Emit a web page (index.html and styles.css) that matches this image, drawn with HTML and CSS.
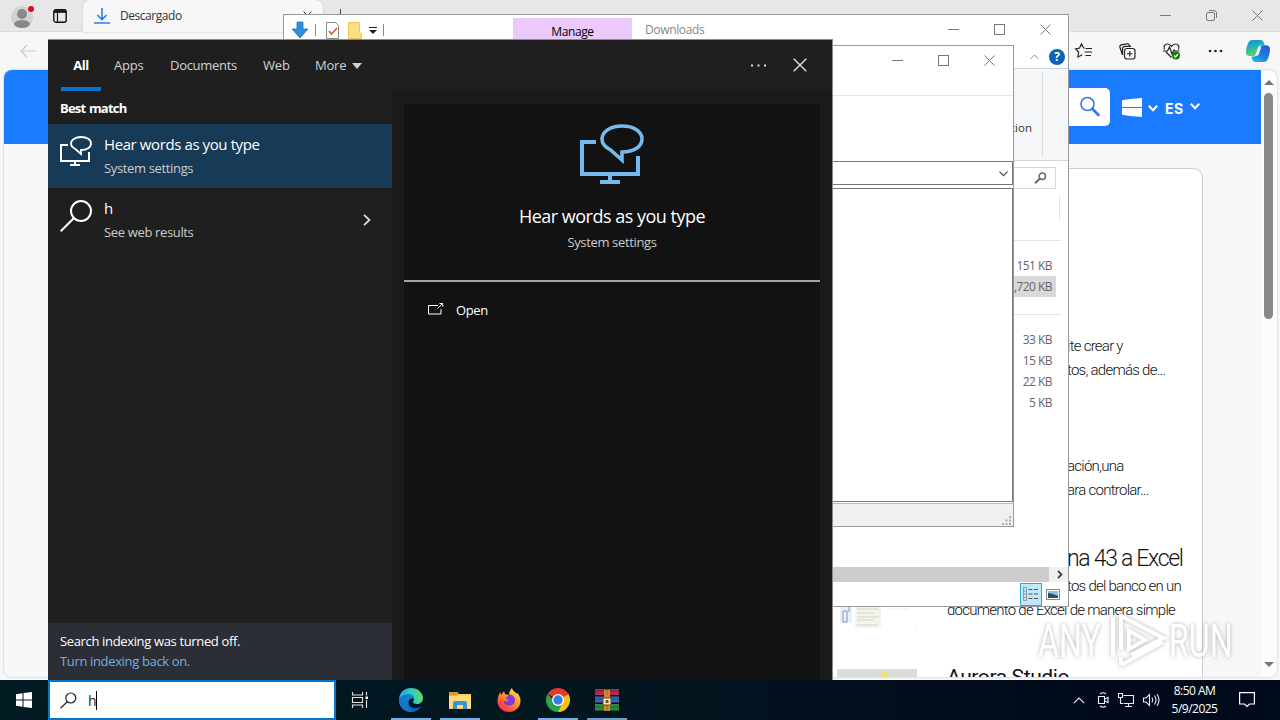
FILE: index.html
```html
<!DOCTYPE html>
<html lang="en">
<head>
    <meta charset="utf-8">
    <title>Desktop</title>
    <link rel="stylesheet" href="styles.css">
</head>
<body>
<div class="desktop">

    <!-- browser -->
    <div class="browser">
        <div class="tab-strip">
            <div class="profile">
                <svg width="24" height="24" viewBox="0 0 24 24"><circle cx="11" cy="13" r="11" fill="#d5d3d1"/><circle cx="11" cy="10" r="5" fill="#8a8886"/><ellipse cx="11" cy="20" rx="8" ry="4" fill="#8a8886"/><circle cx="20" cy="5" r="3" fill="#d40f1b"/></svg>
            </div>
            <svg class="workspaces" width="14" height="14" viewBox="0 0 14 14"><rect x=".8" y=".8" width="12.4" height="12.4" rx="2" fill="none" stroke="#111" stroke-width="1.4"/><path d="M1 2.500h12" stroke="#111" stroke-width="2.600"/><path d="M4.500 3v10" stroke="#111" stroke-width="1.200"/></svg>
            <div class="tab">
                <svg width="16" height="16" viewBox="0 0 16 16" fill="none" stroke="#2b7cf0" stroke-width="1.6"><path d="M8 0v11M3.5 7L8 11.5 12.5 7M0 15h16"/></svg>
                <span>Descargado</span>
                <svg class="tab-close" width="9" height="9" viewBox="0 0 9 9" stroke="#333"><path d="M.5.5l8 8M8.500.5l-8 8"/></svg>
            </div>
            <svg class="new-tab" width="13" height="13" viewBox="0 0 13 13" stroke="#444"><path d="M6.500 0v13M0 6.500h13"/></svg>
            <div class="win-controls">
                <svg width="11" height="11" viewBox="0 0 11 11"><path d="M0 5.500h11"/></svg>
                <svg width="11" height="11" viewBox="0 0 11 11"><rect x=".5" y="2.500" width="8" height="8" rx="1.500"/><path d="M3 .5h5q2.500 0 2.500 2.500v5"/></svg>
                <svg width="11" height="11" viewBox="0 0 11 11"><path d="M.5.5l10 10M10.500.5l-10 10"/></svg>
            </div>
        </div>
        <div class="toolbar">
            <svg class="back" width="16" height="14" viewBox="0 0 16 14" fill="none" stroke="#c9c9c9" stroke-width="1.200"><path d="M16 7H1M7 1L1 7l6 6"/></svg>
            <div class="toolbar-icons">
                <svg width="17" height="16" viewBox="0 0 17 16"><path d="M9.500 5.200L8.700 5 6.500.8 4.600 5 .6 5.800l3 3.200-.7 5 4.300-2.200M10.500 5.500H17M9.500 9H17M10.500 12.500H16"/></svg>
                <svg width="17" height="17" viewBox="0 0 17 17"><rect x="5.500" y="5.500" width="10.500" height="10.500" rx="2.500"/><path d="M10.750 8v5.500M8 10.750h5.500M3.500 12L1 4.500Q.3 2.500 2.200 1.900L7.500.8q2-.5 2.700 1.200l.4 1M3.500 12V6q0-2.500 2.500-2.700h6"/></svg>
                <svg width="18" height="17" viewBox="0 0 18 17"><path d="M8.500 14.500L3 9M1.500 6.500C0 3.500 2 1 4.500 1 6.500 1 7.500 2 8.500 3.300 9.500 2 10.500 1 12.500 1 15 1 17 3.500 15.500 6.500M0 8h4.500l2-4 2.500 7 2-4 1 1h4.500"/><circle cx="13" cy="12.500" r="4" fill="#107c10" stroke="none"/><path d="M11 12.500l1.500 1.500 2.500-3" stroke="#fff"/></svg>
                <svg width="15" height="4" viewBox="0 0 15 4"><g fill="#222" stroke="none"><circle cx="2" cy="2" r="1.300"/><circle cx="7.500" cy="2" r="1.300"/><circle cx="13" cy="2" r="1.300"/></g></svg>
                <svg class="copilot" width="24" height="22" viewBox="0 0 24 22">
                    <defs>
                        <linearGradient id="cpA" x1="0" y1="0" x2=".3" y2="1"><stop offset="0" stop-color="#1588d8"/><stop offset=".5" stop-color="#22b5b0"/><stop offset="1" stop-color="#62d35c"/></linearGradient>
                        <linearGradient id="cpB" x1="0" y1="1" x2=".6" y2="0"><stop offset="0" stop-color="#23c1f2"/><stop offset=".5" stop-color="#1a83e0"/><stop offset="1" stop-color="#2360d8"/></linearGradient>
                    </defs>
                    <path d="M6 0h9q2 0 3 3l.6 2H15q-2 0-2.800 3l-1.500 5q-.8 3-3.200 3H3.500Q0 16-.1 12 0 8 2 3.500 3.500 0 6 0z" fill="url(#cpA)" stroke="none"/>
                    <path d="M18 22H9q-2 0-3-3l-.5-2.500h2.800q2.400 0 3.200-3L13 8q.8-2.800 3-2.800h4.500q3.500.3 3.500 4.300 0 4-2 9-1.500 3.500-4 3.500z" fill="url(#cpB)" stroke="none"/>
                    <path d="M12.500 6.500h3l-3.300 9h-3z" fill="#f7f7f7" stroke="none"/>
                </svg>
            </div>
        </div>
        <div class="page">
            <div class="page-content">
                <div class="site-header">
                    <div class="site-search">
                        <svg width="22" height="22" viewBox="0 0 22 22" fill="none" stroke="#2f79e8"><circle cx="8.500" cy="8" r="6.500" stroke-width="1.600"/><path d="M13.500 13l6 6" stroke-width="2.600" stroke-linecap="round"/></svg>
                    </div>
                    <svg class="site-win" width="20" height="19" viewBox="0 0 20 19" fill="#fff"><path d="M0 2.200L8 1v8H0zM8 1L20 0v9H8zM0 10h8v8l-8-1.200zM8 10H20v9l-12-1z"/></svg>
                    <svg class="chev-a" width="10" height="7" viewBox="0 0 10 7" fill="none" stroke="#fff" stroke-width="2"><path d="M.8.8L5 5.200 9.200.8"/></svg>
                    <span class="lang">ES</span>
                    <svg class="chev-b" width="10" height="7" viewBox="0 0 10 7" fill="none" stroke="#fff" stroke-width="2"><path d="M.8.8L5 5.200 9.200.8"/></svg>
                </div>
                <div class="results">
                    <div class="result">
                        <div class="thumb"></div>
                        <div class="result-text"><h3></h3><p class="cut">ite crear y</p><p class="cut">tos, además de...</p></div>
                    </div>
                    <div class="result">
                        <div class="thumb"></div>
                        <div class="result-text"><h3></h3><p class="cut">ación,una</p><p class="cut">ara controlar...</p></div>
                    </div>
                    <div class="result">
                        <div class="thumb">
                            <svg width="80" height="80" viewBox="0 0 80 80"><rect x="3" y="57" width="12" height="17" fill="#e9eff6"/><path d="M6 62v11h4V62zM12 58v5" fill="none" stroke="#8298b5"/><rect x="18" y="54" width="26" height="25" fill="#f3f4ec"/><path d="M20 60h22M20 64h17M20 68h22M20 71h17M20 76h21" stroke="#d0d6c8"/><path d="M50 60h22M79.500 76v4" stroke="#f0f0f0"/></svg>
                        </div>
                        <div class="result-text"><h3 class="cut">na 43 a Excel</h3><p class="cut">tos del banco en un</p><p>documento de Excel de manera simple</p></div>
                    </div>
                    <div class="result">
                        <div class="thumb thumb-grey"><i></i></div>
                        <div class="result-text"><h3 class="studio">Aurora Studio</h3></div>
                    </div>
                </div>
            </div>
            <div class="scrollbar">
                <i class="arrow-up"></i>
                <div class="scroll-thumb"></div>
                <i class="arrow-down"></i>
            </div>
        </div>
    </div>

    <!-- file explorer -->
    <div class="explorer">
        <div class="title-row">
            <div class="quick">
                <svg width="18" height="18" viewBox="0 0 18 18"><path d="M6 1h6v7h5l-8 9-8-9h5z" fill="#2f8fdf" stroke="#2273b8" stroke-width=".8"/></svg>
                <i></i>
                <svg width="13" height="17" viewBox="0 0 13 17" fill="#fff"><path d="M.5.5h9l3 3v13H.5z" stroke="#8a8a8a"/><path d="M3 9l2.500 3L11 6" fill="none" stroke="#e0553a" stroke-width="1.600"/></svg>
                <svg width="14" height="17" viewBox="0 0 14 17"><path d="M.5.5h11v10l2 1v5H.5z" fill="#fbdf85" stroke="#eac65c"/></svg>
                <svg width="8" height="7" viewBox="0 0 8 7"><path d="M0 .5h8" stroke="#222"/><path d="M0 3h8L4 7z" fill="#222"/></svg>
                <i></i>
            </div>
            <div class="manage">Manage</div>
            <span class="win-title">Downloads</span>
            <div class="win-controls">
                <svg width="11" height="11" viewBox="0 0 11 11"><path d="M0 5.500h11"/></svg>
                <svg width="11" height="11" viewBox="0 0 11 11"><rect x=".5" y=".5" width="10" height="10"/></svg>
                <svg width="11" height="11" viewBox="0 0 11 11"><path d="M.5.5l10 10M10.500.5l-10 10"/></svg>
            </div>
        </div>
        <div class="ribbon-tabs">
            <svg width="9" height="6" viewBox="0 0 9 6" fill="none" stroke="#8a8a8a"><path d="M.5 5l4-4 4 4"/></svg>
            <span class="help">?</span>
        </div>
        <div class="ribbon"><span>ction</span></div>
        <div class="address-row">
            <div class="find">
                <svg width="13" height="12" viewBox="0 0 13 12" fill="none" stroke="#6b6b6b"><circle cx="8.300" cy="4.200" r="3.200" stroke-width="1.500"/><path d="M6 6.500L1 11.300" stroke-width="2"/></svg>
            </div>
        </div>
        <div class="col-head"></div>
        <div class="files">
            <div class="group-line"></div>
            <div class="file">151 KB</div>
            <div class="file selected">,720 KB</div>
            <div class="group-line second"></div>
            <div class="file">33 KB</div>
            <div class="file">15 KB</div>
            <div class="file">22 KB</div>
            <div class="file">5 KB</div>
        </div>
        <div class="h-scroll">
            <div class="h-thumb"></div>
            <svg width="6" height="9" viewBox="0 0 6 9" fill="none" stroke="#444" stroke-width="1.800"><path d="M1 1l3.500 3.500L1 8"/></svg>
        </div>
        <div class="status-row">
            <div class="view-on">
                <svg width="16" height="14" viewBox="0 0 16 14" fill="none"><path d="M.5.5h3v13h-3zM.5 4h3M.5 7h3M.5 10.500h3" stroke="#999"/><path d="M5.500 2.500H16M5.500 7H16M5.500 11.500H16" stroke="#555" stroke-dasharray="4 1.500"/></svg>
            </div>
            <svg width="14" height="11" viewBox="0 0 14 11"><rect x=".5" y=".5" width="13" height="10" fill="#fff" stroke="#888"/><rect x="2" y="2" width="10" height="7" fill="#8bc0ee"/><path d="M2 4l5 1 5 2v2H2z" fill="#28505e"/></svg>
        </div>
    </div>

    <!-- dialog over the explorer -->
    <div class="dialog">
        <div class="dialog-head">
            <div class="win-controls">
                <svg width="11" height="11" viewBox="0 0 11 11"><path d="M0 5.500h11"/></svg>
                <svg width="11" height="11" viewBox="0 0 11 11"><rect x=".5" y=".5" width="10" height="10"/></svg>
                <svg width="11" height="11" viewBox="0 0 11 11"><path d="M.5.5l10 10M10.500.5l-10 10"/></svg>
            </div>
        </div>
        <div class="dialog-tools"></div>
        <div class="combo"><svg width="9" height="6" viewBox="0 0 9 6" fill="none" stroke="#444" stroke-width="1.200"><path d="M.5.7l4 4 4-4"/></svg></div>
        <div class="list"></div>
        <div class="dialog-status">
            <svg width="10" height="10" viewBox="0 0 10 10" fill="#aaa"><path d="M7 0h2v2H7zM7 3.500h2v2H7zM7 7h2v2H7zM3.500 3.500h2v2h-2zM3.500 7h2v2h-2zM0 7h2v2H0z"/></svg>
        </div>
    </div>

    <!-- watermark -->
    <div class="watermark">
        <span>ANY</span>
        <svg width="56" height="60" viewBox="0 0 56 60" fill="none" stroke="#fff" stroke-width="4"><path d="M3 6v40M11 3v36M11 5l42 22-32 17M19 20l16 9-16 9V18M11 54l42-23M11 46v8"/></svg>
        <span>RUN</span>
    </div>

    <!-- start search -->
    <div class="search-panel">
        <div class="search-tabs">
            <span class="active">All</span>
            <span class="t-apps">Apps</span>
            <span class="t-docs">Documents</span>
            <span class="t-web">Web</span>
            <span class="t-more">More<i></i></span>
            <svg class="dots" width="15" height="3" viewBox="0 0 15 3" fill="#ddd"><path d="M0 .5h2v2H0zM6.500.5h2v2h-2zM13 .5h2v2h-2z"/></svg>
            <svg class="close" width="14" height="14" viewBox="0 0 14 14" stroke="#ddd" stroke-width="1.400"><path d="M.7.7l12.600 12.600M13.300.7L.7 13.300"/></svg>
        </div>
        <div class="search-body">
            <div class="search-left">
                <div class="section">Best match</div>
                <div class="hit hit-on">
                    <svg width="32" height="32" viewBox="0 0 64 64" fill="none" stroke="#fff" stroke-width="4"><path d="M16 18H2v32h56V32M30 50v8M20 58h20"/><path d="M42 28c12 0 20-5.500 20-13S54 2 42 2 22 8 22 15c0 5 3 8 8 10.500L42 36z" stroke-width="3.600"/></svg>
                    <div><b>Hear words as you type</b><small>System settings</small></div>
                </div>
                <div class="hit">
                    <svg width="32" height="32" viewBox="0 0 32 32" fill="none" stroke="#fff" stroke-width="2"><circle cx="21" cy="11" r="10"/><path d="M14 18L.7 31.300"/></svg>
                    <div><b>h</b><small>See web results</small></div>
                    <svg class="go" width="8" height="12" viewBox="0 0 8 12" fill="none" stroke="#ddd" stroke-width="1.800"><path d="M1 .8L6.500 6 1 11.200"/></svg>
                </div>
                <div class="notice"><p>Search indexing was turned off.</p><a>Turn indexing back on.</a></div>
            </div>
            <div class="search-right">
                <div class="preview">
                    <div class="preview-top">
                        <svg width="64" height="64" viewBox="0 0 64 64" fill="none" stroke="#76b9ed" stroke-width="4"><path d="M16 18H2v32h56V32M30 50v8M20 58h20"/><path d="M42 28c12 0 20-5.500 20-13S54 2 42 2 22 8 22 15c0 5 3 8 8 10.500L42 36z" stroke-width="3.600"/></svg>
                        <h2>Hear words as you type</h2>
                        <small>System settings</small>
                    </div>
                    <div class="action">
                        <svg width="16" height="12" viewBox="0 0 16 12" fill="none" stroke="#fff"><path d="M10 2.500H.5v8.500h12.500V6M9.500 5.500l5-5M11.500.5h3.200v3.200"/></svg>
                        <span>Open</span>
                    </div>
                </div>
            </div>
        </div>
    </div>

    <!-- taskbar -->
    <div class="taskbar">
        <div class="start"><svg width="16" height="16" viewBox="0 0 16 16" fill="#fff"><path d="M0 2.200L6.500 1.300v6.200H0zM7.500 1.100L16 0v7.500H7.500zM0 8.500h6.500v6.200L0 13.800zM7.500 8.500H16V16l-8.500-1.100z"/></svg></div>
        <div class="search-box">
            <svg width="17" height="17" viewBox="0 0 17 17" fill="none" stroke="#222" stroke-width="1.200"><circle cx="10.800" cy="6" r="5"/><path d="M7.300 9.700L.5 16.300"/></svg>
            <span>h</span><i></i>
        </div>
        <div class="task task-view">
            <svg width="17" height="16" viewBox="0 0 17 16" fill="none" stroke="#e6e6e6" stroke-width="1.100"><path d="M.5 0v3h10V0M.5 16v-3h10v3M.5 5.500h10v5H.5zM14.500 0v3.500M14.500 8v8"/><path d="M13.500 4.500h2.500v2.500h-2.500z" fill="#fff" stroke="none"/></svg>
        </div>
        <div class="task open">
            <svg width="24" height="24" viewBox="0 0 24 24">
                <defs>
                    <linearGradient id="edA" x1="0" y1=".4" x2="1" y2=".3"><stop offset="0" stop-color="#2aa8ea"/><stop offset=".5" stop-color="#30c6c9"/><stop offset="1" stop-color="#66dc5c"/></linearGradient>
                    <linearGradient id="edB" x1="0" y1="0" x2="1" y2="1"><stop offset="0" stop-color="#1c93e3"/><stop offset="1" stop-color="#0c59a4"/></linearGradient>
                </defs>
                <path d="M0 12C0 4 6 0 12 0c7 0 12 5 12 10 0 4-3 6-6 6-2 0-4-.8-4-2 0-.8 1-1 1-3 0-2-2-4-5-4-5 0-9 3-10 5z" fill="url(#edA)"/>
                <path d="M0 12c1-4 5-6 9-6 4 0 6 2.500 6 5-1.500-1-5-.5-5.500 3-.4 4 3.500 7 8.500 6 1.500-.3 3-1 4-1.500-2 3.500-6 5.500-10 5.500C5 24 0 19 0 12z" fill="url(#edB)"/>
                <path d="M9 7c-4 4-3 13 5 16.800-8 1-14-5-14-11.800C1 9 5 7 9 7z" fill="#1678c6"/>
            </svg>
        </div>
        <div class="task open">
            <svg width="22" height="20" viewBox="0 0 22 20"><path d="M0 2h8l2 2h12v15H0z" fill="#fbcf5c"/><path d="M0 2h8l2 2-2 1.500H0z" fill="#dd9d22"/><path d="M0 6h22v12H0z" fill="#fddb78"/><path d="M4 19v-6q0-2 2-2h10q2 0 2 2v6h-4v-4H8v4z" fill="#3595d8"/></svg>
        </div>
        <div class="task">
            <svg width="24" height="24" viewBox="0 0 24 24">
                <defs><linearGradient id="ff" x1=".9" y1="0" x2=".2" y2="1"><stop offset="0" stop-color="#fff04a"/><stop offset=".45" stop-color="#ff9626"/><stop offset="1" stop-color="#f5244f"/></linearGradient></defs>
                <path d="M12 24C5 24 .5 19 .5 13c0-4 1.500-7 3-9l.7 3L7 3l1 3 4 1c0-4 2-6 3-7 1 4 4 4 5 6l.5-1c2 3 3 5 3 8 0 6-5 11-11.500 11z" fill="url(#ff)"/>
                <path d="M12 6.500c4 0 6 3 6 5.500 0 3-2 5.500-6 5.500-3 0-5.500-2-5.500-5 2 1.500 4 1 5.500-.5-2-.5-4-1-4.500-3 1.500.4 3-.3 4.500-2.500z" fill="#7b3be0"/>
                <path d="M5 6c1 2 3 2 6 3-2 .5-3 1-3 3-2 0-4-3-3-6z" fill="#ff8a21"/>
            </svg>
        </div>
        <div class="task open">
            <svg width="24" height="24" viewBox="0 0 24 24"><path d="M12 12L1.600 6A12 12 0 0 1 22.400 6z" fill="#e23b2e"/><path d="M12 12l10.400-6A12 12 0 0 1 12 24z" fill="#fbc116"/><path d="M12 24A12 12 0 0 1 1.600 6L9 13.500l7.700 1z" fill="#2ba24c"/><path d="M12 6h10.400" stroke="#e23b2e" stroke-width="2"/><circle cx="12" cy="12" r="6" fill="#fff"/><circle cx="12" cy="12" r="4.700" fill="#3a7bea"/></svg>
        </div>
        <div class="task open open-more">
            <svg width="24" height="22" viewBox="0 0 24 22"><path d="M0 0h24v6H0z" fill="#b42b51"/><path d="M0 7.500h24v6H0z" fill="#4062b4"/><path d="M0 15h24v6.500H0z" fill="#2f8a3c"/><path d="M0 2h24M0 10h24M0 18h24" stroke="#0004" stroke-width="1"/><path d="M9 1h6v21H9z" fill="#d98a28"/><path d="M8 9h8v7H8z" fill="#f6ecd0" stroke="#6b4310"/><path d="M10.500 11h3v3h-3z" fill="#7b4c12"/><path d="M12 1v6M12 17v5" stroke="#744611" stroke-dasharray="1 1"/></svg>
        </div>
        <div class="tray">
            <svg width="12" height="7" viewBox="0 0 12 7"><path d="M.8 6.200L6 1l5.200 5.200"/></svg>
            <svg width="12" height="16" viewBox="0 0 12 16"><path d="M3 2q3-2.400 6 0M3 14q3 2.400 6 0M1.500 4.500h6v7h-6zM8 7l3-1.500v5L8 9"/></svg>
            <svg width="16" height="14" viewBox="0 0 16 14"><path d="M5.500 2.500h10v8H5.500M10.500 10.500v3M7 13.500h7M.5.5h4v4h-4zM2.500 4.500v6h2.500"/></svg>
            <svg width="17" height="14" viewBox="0 0 17 14"><path d="M.5 5v4h2.500l3.500 3.500v-11L3 5zM9 4.500q1.500 2.500 0 5M11.500 2.500q3 4.500 0 9M14 1q4 6 0 12"/></svg>
        </div>
        <div class="clock"><span>8:50 AM</span><span>5/9/2025</span></div>
        <svg class="action-center" width="16" height="16" viewBox="0 0 16 16" fill="none" stroke="#fff" stroke-width="1.200"><path d="M.6.6h14.800v11.400H10.500L8 14.500 5.500 12H.6z"/></svg>
    </div>
</div>
</body>
</html>
```
FILE: styles.css
```css
* {
    box-sizing: border-box;
}

body {
    margin: 0;
    font-family: "Open Sans", "Noto Sans", sans-serif;
    font-size: 13px;
    overflow: hidden;
}

h2, h3, p {
    margin: 0;
    font-weight: 400;
}

svg {
    display: block;
    flex-shrink: 0;
    overflow: visible;
}

span, b, small, a, p, h2, h3 {
    white-space: nowrap;
}

.desktop {
    position: relative;
    width: 1280px;
    height: 720px;
    overflow: hidden;
}

/* windows on the desktop */
.browser, .explorer, .dialog, .search-panel {
    position: absolute;
    display: flex;
    flex-direction: column;
}

.win-controls {
    display: flex;
    gap: 35px;
    margin-left: auto;
    fill: none;
    stroke: #777;
}

/* browser */
.browser {
    left: 0;
    top: 0;
    width: 1280px;
    height: 680px;
    background: #f7f7f7;
}

.tab-strip {
    display: flex;
    align-items: center;
    height: 32px;
    background: #e7e7e7;
    border-bottom: 1px solid #dcdcdc;
}

.profile {
    margin: 0 18px 0 11px;
}

.tab {
    display: flex;
    align-items: center;
    width: 240px;
    height: 32px;
    margin-left: 16px;
    padding: 0 11px;
    background: #f7f7f7;
    border-radius: 7px 7px 0 0;
    box-shadow: 0 0 2px #bbb;
    font-size: 12px;
    letter-spacing: -.45px;
    color: #333;
}

.tab span {
    margin-left: 10px;
}

.tab-close {
    margin-left: auto;
}

.new-tab {
    margin-left: 11px;
}

.tab-strip .win-controls {
    margin-right: 17px;
}

.toolbar {
    display: flex;
    align-items: center;
    height: 38px;
    padding: 0 10px 0 20px;
}

.toolbar-icons {
    display: flex;
    align-items: center;
    gap: 27px;
    margin-left: auto;
    fill: none;
    stroke: #222;
    stroke-width: 1.2;
}

.copilot {
    margin-left: -4px;
}

.page {
    display: flex;
    width: 1273px;
    height: 607px;
    margin-left: 4px;
    background: #fcfcfc;
    border-radius: 8px;
    box-shadow: 0 0 2px #aaa;
    overflow: hidden;
}

.page-content {
    width: 1257px;
    background: #f7f7f7;
    overflow: hidden;
}

.site-header {
    display: flex;
    align-items: center;
    height: 74px;
    background: #1a7bff;
}

.site-search {
    display: flex;
    align-items: center;
    justify-content: flex-end;
    width: 500px;
    height: 38px;
    margin-left: 606px;
    padding-right: 9px;
    background: #fff;
    border-radius: 5px;
}

.site-win {
    margin-left: 12px;
}

.chev-a {
    margin: 3px 7px 0 6px;
}

.lang {
    margin-top: 2px;
    font: 700 14px Inter, sans-serif;
    letter-spacing: .4px;
    color: #fff;
}

.chev-b {
    margin-left: 7px;
    margin-bottom: 2px;
}

.results {
    display: flex;
    flex-direction: column;
    gap: 42px;
    width: 397px;
    height: 600px;
    margin: 24px 0 0 802px;
    padding: 135px 0 0 27px;
    background: #fff;
    border: 1px solid #ccc;
    border-radius: 10px;
}

.result {
    display: flex;
    gap: 30px;
    height: 78px;
    flex-shrink: 0;
}

.thumb {
    width: 80px;
    height: 80px;
    margin: 5px 0 0 3px;
}

.thumb-grey {
    background: #dbdbd9;
}

.thumb-grey i {
    display: block;
    width: 7px;
    height: 6px;
    margin: 3px 44px;
    border-radius: 3px;
    background: #efe069;
}

.result-text {
    font-family: Roboto, sans-serif;
    font-size: 15px;
    font-weight: 300;
    line-height: 24px;
    letter-spacing: -.74px;
    color: #111;
}

.result-text p {
    font-weight: 300;
}

.result-text h3 {
    height: 30px;
    font-size: 23px;
    font-weight: 300;
    line-height: 30px;
    letter-spacing: -1.3px;
}

.result-text .cut {
    padding-left: 120px;
}

.result-text .studio {
    margin-top: -2px;
    font-weight: 400;
    font-size: 21px;
    letter-spacing: -.4px;
}

.scrollbar {
    display: flex;
    flex-direction: column;
    align-items: center;
    width: 15px;
    padding: 10px 0;
}

.arrow-up {
    border: 5px solid transparent;
    border-top: 0;
    border-bottom-color: #777;
}

.scroll-thumb {
    width: 9px;
    height: 226px;
    margin-top: 8px;
    border-radius: 5px;
    background: #888;
}

.arrow-down {
    margin-top: auto;
    border: 5px solid transparent;
    border-bottom: 0;
    border-top-color: #777;
}

/* explorer */
.explorer {
    left: 283px;
    top: 14px;
    width: 786px;
    height: 593px;
    background: #fff;
    border: 1px solid #999;
}

.title-row {
    display: flex;
    height: 30px;
    font-size: 12px;
}

.quick {
    display: flex;
    align-items: center;
    width: 229px;
    padding-left: 7px;
}

.quick i {
    width: 1px;
    height: 12px;
    margin: 0 10px 0 6px;
    background: #888;
}

.quick svg + svg {
    margin-left: 9px;
}

.quick svg + svg + svg {
    margin-left: 7px;
}

.manage {
    width: 119px;
    height: 27px;
    margin-top: 3px;
    background: #ebc9fb;
    text-align: center;
    line-height: 28px;
    letter-spacing: -.4px;
}

.win-title {
    margin-left: 13px;
    line-height: 29px;
    letter-spacing: -.35px;
    color: #888;
}

.title-row .win-controls {
    margin-top: 9px;
    margin-right: 17px;
}

.ribbon-tabs {
    display: flex;
    align-items: center;
    justify-content: flex-end;
    gap: 10px;
    height: 23px;
    padding-right: 3px;
}

.help {
    width: 16px;
    height: 16px;
    border-radius: 50%;
    background: #0b63b5;
    color: #fff;
    font-weight: 700;
    font-size: 12px;
    line-height: 16px;
    text-align: center;
}

.ribbon {
    height: 93px;
    padding: 4px 25px 4px 0;
    background: #f5f6f7;
    border: solid #d4d5d6;
    border-width: 1px 0;
    text-align: right;
    font-size: 11.500px;
    line-height: 109px;
    color: #333;
}

.ribbon span {
    display: block;
    height: 84px;
    padding-right: 10px;
    border-right: 1px solid #dadbdc;
}

.address-row {
    height: 34px;
    padding: 6px 12px 0 0;
}

.find {
    display: flex;
    align-items: center;
    justify-content: flex-end;
    width: 200px;
    height: 22px;
    margin-left: auto;
    padding-right: 8px;
    border: 1px solid #d9d9d9;
}

.col-head {
    width: 776px;
    height: 25px;
    border-right: 1px solid #e3e3e3;
}

.files {
    height: 347px;
    padding-right: 12px;
    font-size: 12px;
    letter-spacing: -.55px;
    color: #666;
}

.group-line {
    height: 1px;
    margin: 20px -5px 14px 0;
    background: #e3e3e3;
}

.group-line.second {
    margin-top: 17px;
}

.file {
    height: 21px;
    padding-right: 4px;
    line-height: 21px;
    text-align: right;
}

.file.selected {
    background: #d9d9d9;
}

.h-scroll {
    display: flex;
    align-items: center;
    height: 15px;
    background: #f1f1f1;
}

.h-thumb {
    width: 765px;
    height: 15px;
    margin-right: 8px;
    background: #cdcdcd;
}

.status-row {
    display: flex;
    align-items: center;
    justify-content: flex-end;
    gap: 4px;
    flex: 1;
    padding-right: 8px;
}

.view-on {
    display: flex;
    align-items: center;
    justify-content: center;
    width: 22px;
    height: 23px;
    background: #bfe8fb;
    border: 1px solid #35a3d3;
}

/* dialog */
.dialog {
    left: 480px;
    top: 45px;
    width: 534px;
    height: 482px;
    background: #fff;
    border: 1px solid #999;
}

.dialog-head {
    display: flex;
    height: 50px;
    padding: 9px 18px 0 0;
    border-bottom: 1px solid #e6e6e6;
}

.dialog-tools {
    height: 65px;
}

.combo {
    display: flex;
    align-items: center;
    justify-content: flex-end;
    height: 24px;
    padding: 2px 4px 0 0;
    border: 1px solid #777;
}

.list {
    height: 314px;
    margin-top: 3px;
    border: 1px solid #777;
}

.dialog-status {
    display: flex;
    align-items: flex-end;
    justify-content: flex-end;
    flex: 1;
    margin-top: 1px;
    padding: 0 1px 0 0;
    background: #f0f0f0;
    border-top: 1px solid #bbb;
}

/* watermark lies over the browser page */
.watermark {
    position: absolute;
    left: 1038px;
    top: 611px;
    display: flex;
    align-items: center;
    gap: 9px;
    font: 400 46px/60px "Liberation Sans Narrow", Roboto, sans-serif;
    color: #fff;
    opacity: .75;
    filter: drop-shadow(0 0 2px #999);
}

.watermark span {
    width: 63px;
    transform: scaleX(.7);
    transform-origin: 0 50%;
}

.watermark span:last-child {
    margin-left: -6px;
}

/* start search */
.search-panel {
    left: 48px;
    top: 39px;
    width: 785px;
    height: 641px;
    background: #1f1f1f;
    border: solid #8a8a8a;
    border-width: 1px 1px 0 0;
    color: #fff;
}

.search-tabs {
    display: flex;
    height: 51px;
    padding-left: 13px;
    line-height: 50px;
    letter-spacing: -.2px;
    color: #d2d2d2;
}

.search-tabs .active {
    width: 40px;
    border-bottom: 4px solid #0a74cc;
    color: #fff;
    font-weight: 700;
    letter-spacing: -.5px;
    text-align: center;
}

.t-apps { width: 56px; margin-left: 13px; }
.t-docs { width: 93px; letter-spacing: -.3px; }
.t-web { width: 52px; }
.t-more { width: 60px; }

.t-more i {
    display: inline-block;
    margin: 0 0 1px 6px;
    border: 5px solid transparent;
    border-bottom: 0;
    border-top: 6px solid #d2d2d2;
}

.dots {
    margin: 24px 27px 0 auto;
}

.close {
    margin: 18px 25px 0 0;
}

.search-body {
    display: flex;
    flex: 1;
}

.search-left {
    display: flex;
    flex-direction: column;
    width: 344px;
}

.section {
    height: 33px;
    padding-left: 12px;
    line-height: 34px;
    font-weight: 700;
    letter-spacing: -.8px;
    word-spacing: 1px;
}

.hit {
    display: flex;
    gap: 12px;
    height: 64px;
    padding: 12px 12px 0;
}

.hit-on {
    background: #173a57;
}

.hit b, .hit small {
    display: block;
    font-weight: 400;
}

.hit b {
    margin: -3px 0 1px;
    font-size: 15px;
    line-height: 22px;
    letter-spacing: -.4px;
}

.hit small, .preview small {
    font-size: 13px;
    line-height: 25px;
    letter-spacing: -.35px;
    color: #ccc;
}

.go {
    margin: 14px 9px 0 auto;
}

.notice {
    height: 57px;
    margin-top: auto;
    padding: 8px 12px;
    background: #2c2e36;
    line-height: 20px;
    letter-spacing: -.35px;
}

.notice a {
    color: #6fb0e0;
}

.search-right {
    width: 440px;
    padding: 13px 12px 0;
    background: #1a1a1a;
}

.preview {
    height: 576px;
    background: #121212;
}

.preview-top {
    display: flex;
    flex-direction: column;
    align-items: center;
    height: 178px;
    padding-top: 20px;
    border-bottom: 2px solid #a5a5a5;
}

.preview h2 {
    margin: 15px 0 1px;
    font-size: 18px;
    line-height: 26px;
    letter-spacing: -.5px;
}

.action {
    display: flex;
    align-items: center;
    gap: 12px;
    height: 56px;
    padding-left: 24px;
    letter-spacing: -.4px;
}

.action svg {
    margin-bottom: 3px;
}

/* taskbar */
.taskbar {
    position: absolute;
    left: 0;
    top: 680px;
    display: flex;
    align-items: center;
    width: 1280px;
    height: 40px;
    background: linear-gradient(90deg, #021c24, #02151f 50%, #020b1b 80%, #020b1b);
    color: #fff;
}

.start {
    display: flex;
    align-items: center;
    justify-content: center;
    width: 48px;
}

.search-box {
    display: flex;
    align-items: center;
    width: 288px;
    height: 40px;
    padding-left: 10px;
    background: #fff;
    border: 2px solid #0a74cc;
    font-size: 14px;
    color: #222;
}

.search-box span {
    margin-left: 11px;
    letter-spacing: -.8px;
}

.search-box i {
    width: 1px;
    height: 19px;
    background: #000;
}

.task {
    display: flex;
    align-items: center;
    justify-content: center;
    width: 40px;
    height: 40px;
    margin-right: 9px;
}

.task-view {
    width: 48px;
    margin-right: 7px;
}

.task.open {
    border-bottom: 2px solid #76b0e4;
    padding-top: 2px;
}

.task.open-more {
    border-bottom-color: #6a9cca;
}

.tray {
    display: flex;
    align-items: center;
    gap: 9px;
    margin-left: auto;
    fill: none;
    stroke: #eee;
    stroke-width: 1.1;
}

.tray svg:first-child {
    margin-right: 3px;
}

.clock {
    display: flex;
    flex-direction: column;
    align-items: center;
    width: 49px;
    margin: 0 20px 0 10px;
    font-size: 12px;
    line-height: 18px;
    letter-spacing: -.5px;
}

.action-center {
    margin-right: 25px;
}
```
